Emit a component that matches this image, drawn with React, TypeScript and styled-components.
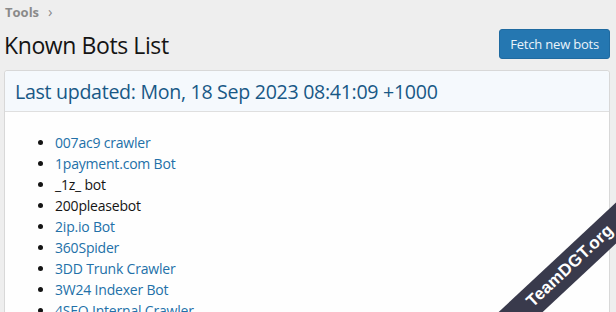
import React from 'react';
import styled, { createGlobalStyle } from 'styled-components';

const GlobalStyle = createGlobalStyle`
  html, body {
    margin: 0;
    padding: 0;
    background: #eeeeee;
    font-family: "Open Sans", "Noto Sans", sans-serif;
    color: #141414;
    overflow: hidden;
  }
`;

const Page = styled.div`
  position: relative;
  width: 616px;
  height: 312px;
  overflow: hidden;
  padding: 0 6px 0 4px;
  box-sizing: border-box;
`;

const Breadcrumb = styled.div`
  display: flex;
  align-items: center;
  gap: 9px;
  height: 24px;
  padding-left: 1px;
  font-size: 13px;
  font-weight: 700;
  color: #8a8a8a;
`;

const Chevron = styled.span`
  font-weight: 400;
  font-size: 15px;
  line-height: 1;
  margin-top: -2px;
`;

const TitleRow = styled.div`
  display: flex;
  justify-content: space-between;
  align-items: center;
  height: 42px;
  margin-bottom: 4px;
`;

const Title = styled.h1`
  margin: 0;
  font-size: 23px;
  font-weight: 400;
  letter-spacing: -0.4px;
  color: #141414;
`;

const Button = styled.button`
  height: 30px;
  padding: 0 10px;
  border: 1px solid #1f6aa0;
  border-radius: 3px;
  background: #2577b1;
  color: #eaf3fa;
  font-family: inherit;
  font-size: 13px;
  letter-spacing: -0.2px;
  margin-top: -2px;
`;

const Block = styled.div`
  border: 1px solid #d8d8d8;
  border-radius: 3px;
  background: #fefefe;
  min-height: 260px;
`;

const BlockHeader = styled.h2`
  margin: 0;
  padding: 0 10px;
  height: 40px;
  display: flex;
  align-items: center;
  font-size: 19.6px;
  font-weight: 400;
  letter-spacing: -0.3px;
  color: #185886;
  background: #f5f9fd;
  border-bottom: 1px solid #dfdfdf;
  border-radius: 3px 3px 0 0;
`;

const BotList = styled.ul`
  margin: 0;
  padding: 20px 0 0 50px;
  list-style: disc;
`;

const Bot = styled.li<{ $linked?: boolean }>`
  font-size: 14px;
  line-height: 21px;
  letter-spacing: -0.2px;
  color: ${p => (p.$linked ? '#2270a8' : '#141414')};
  &::marker {
    color: #141414;
  }
`;

const Ribbon = styled.div`
  position: absolute;
  right: -74px;
  bottom: 31px;
  width: 240px;
  height: 30px;
  background: #393a4c;
  color: #ffffff;
  transform: rotate(-43deg);
  display: flex;
  align-items: center;
  justify-content: center;
  font-family: "Liberation Sans", Arial, sans-serif;
  font-weight: 700;
  font-size: 17px;
  letter-spacing: 0.2px;
`;

const bots: { name: string; linked: boolean }[] = [
  { name: '007ac9 crawler', linked: true },
  { name: '1payment.com Bot', linked: true },
  { name: '_1z_ bot', linked: false },
  { name: '200pleasebot', linked: false },
  { name: '2ip.io Bot', linked: true },
  { name: '360Spider', linked: true },
  { name: '3DD Trunk Crawler', linked: true },
  { name: '3W24 Indexer Bot', linked: true },
  { name: '4SEO Internal Crawler', linked: true },
];

const App: React.FC = () => {
  return (
    <>
      <GlobalStyle />
      <Page>
        <Breadcrumb>
          <span>Tools</span>
          <Chevron>›</Chevron>
        </Breadcrumb>
        <TitleRow>
          <Title>Known Bots List</Title>
          <Button>Fetch new bots</Button>
        </TitleRow>
        <Block>
          <BlockHeader>Last updated: Mon, 18 Sep 2023 08:41:09 +1000</BlockHeader>
          <BotList>
            {bots.map(b => (
              <Bot key={b.name} $linked={b.linked}>
                {b.name}
              </Bot>
            ))}
          </BotList>
        </Block>
        <Ribbon>TeamDGT.org</Ribbon>
      </Page>
    </>
  );
};

export default App;
